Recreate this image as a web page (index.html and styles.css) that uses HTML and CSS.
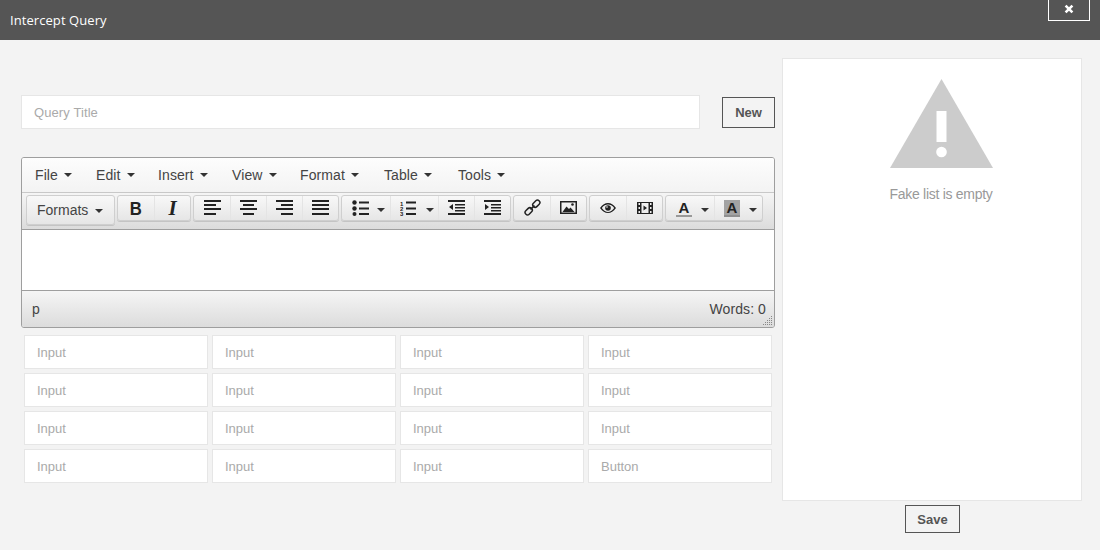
FILE: index.html
```html
<!DOCTYPE html>
<html lang="en">
<head>
<meta charset="utf-8">
<title>Intercept Query</title>
<link rel="stylesheet" href="styles.css">
</head>
<body>
<header class="header">
  <h1 class="header-title">Intercept Query</h1>
  <button class="close-btn" type="button" aria-label="Close">
    <svg width="10" height="10" viewBox="0 0 10 10"><path d="M1.6 1.6 8.4 8.4M8.4 1.6 1.6 8.4" stroke="#fff" stroke-width="2.6" fill="none"/></svg>
  </button>
</header>
<main class="main">
  <section class="left">
    <div class="title-row">
      <input class="title-input" type="text" placeholder="Query Title">
      <button class="plain-btn new-btn" type="button">New</button>
    </div>
    <div class="editor">
      <div class="menubar">
        <div class="menu-item">File<span class="caret"></span></div>
        <div class="menu-item">Edit<span class="caret"></span></div>
        <div class="menu-item">Insert<span class="caret"></span></div>
        <div class="menu-item">View<span class="caret"></span></div>
        <div class="menu-item">Format<span class="caret"></span></div>
        <div class="menu-item">Table<span class="caret"></span></div>
        <div class="menu-item">Tools<span class="caret"></span></div>
      </div>
      <div class="toolbar">
        <div class="group formats">Formats<span class="caret"></span></div>
        <div class="group">
          <div class="tool glyph"><span class="glyph-b">B</span></div>
          <div class="tool glyph"><span class="glyph-i">I</span></div>
        </div>
        <div class="group">
          <div class="tool"><svg class="ico" width="17" height="15" viewBox="0 0 17 15"><path d="M0 0h17v2H0zM0 4h12v2H0zM0 8h17v2H0zM0 13h12v2H0z"/></svg></div>
          <div class="tool"><svg class="ico" width="17" height="15" viewBox="0 0 17 15"><path d="M0 0h17v2H0zM3 4h11v2H3zM0 8h17v2H0zM3 13h11v2H3z"/></svg></div>
          <div class="tool"><svg class="ico" width="17" height="15" viewBox="0 0 17 15"><path d="M0 0h17v2H0zM5 4h12v2H5zM0 8h17v2H0zM5 13h12v2H5z"/></svg></div>
          <div class="tool"><svg class="ico" width="17" height="15" viewBox="0 0 17 15"><path d="M0 0h17v2H0zM0 4h17v2H0zM0 8h17v2H0zM0 13h17v2H0z"/></svg></div>
        </div>
        <div class="group">
          <div class="tool split"><svg class="ico" width="17" height="16" viewBox="0 0 17 16"><circle cx="2.500" cy="2.500" r="2.200"/><circle cx="2.500" cy="8.500" r="2.200"/><circle cx="2.500" cy="14" r="2"/><path d="M7 1.500h10v2H7zM7 7.500h10v2H7zM7 13h10v2H7z"/></svg><span class="caret"></span></div>
          <div class="tool split gap10"><svg class="ico" width="16" height="16" viewBox="0 0 16 16"><text class="num" x="0" y="5.500">1</text><text class="num" x="0" y="11">2</text><text class="num" x="0" y="16">3</text><path d="M6 1.500h10v2H6zM6 7.500h10v2H6zM6 13h10v2H6z"/></svg><span class="caret"></span></div>
          <div class="tool"><svg class="ico" width="17" height="15" viewBox="0 0 17 15"><path d="M0 0h17v2H0zM7 4h10v1.500H7zM7 7h10v1.500H7zM7 10h10v1.500H7zM0 13h17v2H0zM5 4v6L1 7z"/></svg></div>
          <div class="tool"><svg class="ico" width="17" height="15" viewBox="0 0 17 15"><path d="M0 0h17v2H0zM7 4h10v1.500H7zM7 7h10v1.500H7zM7 10h10v1.500H7zM0 13h17v2H0zM1 4v6l4-3z"/></svg></div>
        </div>
        <div class="group">
          <div class="tool"><svg width="17" height="17" viewBox="0 0 17 17" fill="none" stroke="#222" stroke-width="1.500"><rect x="-4" y="-2.400" width="8" height="4.800" rx="2.300" transform="translate(4.700 12.300) rotate(-45)"/><rect x="-4" y="-2.400" width="8" height="4.800" rx="2.300" transform="translate(12.300 4.700) rotate(-45)"/><path d="M6.500 10.500 10.500 6.500" stroke-width="1.700"/></svg></div>
          <div class="tool"><svg width="17" height="13" viewBox="0 0 17 13"><path class="frame" d="M0 0h17v13H0zM1.500 1.500v10h14v-10z"/><path class="frame" d="M2.500 11 6.500 5.500 9 8l1.500-1.500 4 4.500z"/><circle class="frame" cx="12.500" cy="3.500" r="1.300"/></svg></div>
        </div>
        <div class="group">
          <div class="tool"><svg width="16" height="10" viewBox="0 0 16 10"><path class="frame" d="M0 5C2.500 1.500 5 0 8 0s5.500 1.500 8 5c-2.500 3.500-5 5-8 5S2.500 8.500 0 5zm1.800 0C3.800 7.800 5.800 9 8 9s4.200-1.200 6.200-4C12.200 2.400 10.200 1.500 8 1.500S3.800 2.400 1.800 5z"/><circle class="frame" cx="8" cy="5" r="2.800"/><circle class="eye-glint" cx="7" cy="4" r=".8"/></svg></div>
          <div class="tool"><svg width="16" height="12" viewBox="0 0 16 12"><path class="frame" d="M0 0h16v12H0zM1.500 1v2h1.500V1zM1.500 5v2h1.500V5zM1.500 9v2h1.500V9zM13 1v2h1.500V1zM13 5v2h1.500V5zM13 9v2h1.500V9zM4.500 1v10h7V1z"/><path class="frame" d="M6.500 3.500v5L10 6z"/></svg></div>
        </div>
        <div class="group">
          <div class="tool split gap9"><span class="color-a">A</span><span class="caret"></span></div>
          <div class="tool split gap9"><span class="color-a color-back">A</span><span class="caret"></span></div>
        </div>
      </div>
      <div class="edit-area"></div>
      <div class="statusbar">
        <span>p</span>
        <span class="words">Words: 0</span>
        <svg class="resize" width="10" height="10" viewBox="0 0 10 10"><path d="M8 0h1v1H8zM6 2h1v1H6zM8 2h1v1H8zM4 4h1v1H4zM6 4h1v1H6zM8 4h1v1H8zM2 6h1v1H2zM4 6h1v1H4zM6 6h1v1H6zM8 6h1v1H8zM0 8h1v1H0zM2 8h1v1H2zM4 8h1v1H4zM6 8h1v1H6zM8 8h1v1H8z"/></svg>
      </div>
    </div>
    <div class="field-grid">
      <input class="cell" type="text" placeholder="Input">
      <input class="cell" type="text" placeholder="Input">
      <input class="cell" type="text" placeholder="Input">
      <input class="cell" type="text" placeholder="Input">
      <input class="cell" type="text" placeholder="Input">
      <input class="cell" type="text" placeholder="Input">
      <input class="cell" type="text" placeholder="Input">
      <input class="cell" type="text" placeholder="Input">
      <input class="cell" type="text" placeholder="Input">
      <input class="cell" type="text" placeholder="Input">
      <input class="cell" type="text" placeholder="Input">
      <input class="cell" type="text" placeholder="Input">
      <input class="cell" type="text" placeholder="Input">
      <input class="cell" type="text" placeholder="Input">
      <input class="cell" type="text" placeholder="Input">
      <button class="cell cell-btn" type="button">Button</button>
    </div>
  </section>
  <aside class="right">
    <div class="panel">
      <svg class="warn" width="103" height="89" viewBox="0 0 103 89"><path class="warn-tri" d="M51.500 0 103 89H0z"/><path class="warn-mark" d="M46.500 32h10v31h-10z"/><circle class="warn-mark" cx="51.500" cy="73" r="5.300"/></svg>
      <p class="empty">Fake list is empty</p>
    </div>
    <button class="plain-btn save-btn" type="button">Save</button>
  </aside>
</main>
</body>
</html>
```
FILE: styles.css
```css
* { box-sizing: border-box; }
html, body { margin: 0; padding: 0; }
body {
  width: 1100px;
  height: 550px;
  overflow: hidden;
  background: #f3f3f3;
  font-family: "Liberation Sans", Arial, sans-serif;
  font-size: 14px;
  color: #333;
}
.header {
  height: 40px;
  background: #555;
  display: flex;
  justify-content: space-between;
  align-items: flex-start;
  padding-right: 10px;
}
.header-title {
  margin: 0;
  padding-left: 10px;
  font-family: "Open Sans", sans-serif;
  font-size: 13px;
  font-weight: 400;
  line-height: 40px;
  letter-spacing: .07px;
  color: #fff;
}
.close-btn {
  width: 42px;
  height: 21px;
  padding: 0 0 3px;
  border: 1px solid #fff;
  border-top: 0;
  background: transparent;
  display: flex;
  align-items: center;
  justify-content: center;
}
.main { display: flex; align-items: flex-start; padding-left: 21px; }
.left { width: 754px; }
.title-row {
  display: flex;
  justify-content: space-between;
  align-items: flex-start;
  margin-top: 55px;
}
.title-input, .cell {
  border: 1px solid #e6e6e6;
  background: #fff;
  font: 13px "Liberation Sans", Arial, sans-serif;
  color: #333;
  outline: 0;
  border-radius: 0;
}
.title-input { width: 679px; height: 34px; padding: 0 12px; letter-spacing: .1px; }
.title-input::placeholder, .cell::placeholder { color: #aaa; opacity: 1; }
.plain-btn {
  border: 1px solid #555;
  background: transparent;
  border-radius: 0;
  padding: 0;
  font: 700 13px "Liberation Sans", Arial, sans-serif;
  color: #555;
}
.new-btn { width: 53px; height: 31px; margin-top: 2px; }
.editor {
  margin-top: 28px;
  height: 171px;
  border: 1px solid #9e9e9e;
  border-radius: 3px;
  overflow: hidden;
  display: flex;
  flex-direction: column;
}
.menubar {
  height: 35px;
  flex: none;
  display: flex;
  padding-left: 1px;
  border-bottom: 1px solid #c8c8c8;
  background: linear-gradient(#fdfdfd, #f3f3f3);
}
.menu-item {
  display: flex;
  align-items: center;
  padding: 0 12px;
  letter-spacing: .1px;
  color: #444;
}
.menu-item:nth-child(1) { width: 61px; }
.menu-item:nth-child(2) { width: 62px; }
.menu-item:nth-child(3) { width: 74px; }
.menu-item:nth-child(4) { width: 68px; }
.menu-item:nth-child(5) { width: 84px; }
.menu-item:nth-child(6) { width: 74px; }
.caret {
  width: 0;
  height: 0;
  flex: none;
  margin-left: 6px;
  border-top: 4px solid #333;
  border-left: 4px solid transparent;
  border-right: 4px solid transparent;
}
.toolbar {
  height: 37px;
  flex: none;
  display: flex;
  align-items: flex-start;
  gap: 2px;
  padding: 2px 0 0 4px;
  border-bottom: 1px solid #9e9e9e;
  background: linear-gradient(#f5f5f5, #dcdcdc);
}
.group {
  height: 26px;
  display: flex;
  border: 1px solid #cfcfcf;
  border-radius: 3px;
  background: linear-gradient(#f8f8f8, #e6e6e6);
  box-shadow: 0 1px 0 #c4c4c4;
}
.formats {
  width: 89px;
  height: 30px;
  align-items: center;
  padding-left: 10px;
  color: #444;
}
.formats .caret { margin-left: 7px; margin-top: 1px; }
.tool {
  width: 36px;
  height: 24px;
  display: flex;
  align-items: center;
  justify-content: center;
  padding-bottom: 1px;
  border-left: 1px solid #e4e4e4;
}
.tool:first-child { border-left: 0; }
.glyph { padding-bottom: 0; }
.split { width: 48px; justify-content: flex-start; padding-left: 10px; }
.split + .split { padding-left: 9px; }
.split .ico { margin-top: 1px; }
.split .caret { margin-left: 8px; margin-top: 5px; }
.split.gap10 .caret { margin-left: 10px; }
.split.gap9 .caret { margin-left: 9px; }
.ico { fill: #222; display: block; flex: none; }
.frame { fill: #222; fill-rule: evenodd; }
.eye-glint { fill: #fff; }
.num { font: 700 6px "Liberation Sans", Arial, sans-serif; fill: #222; }
.glyph-b {
  display: block;
  font: 700 19px/1 "Liberation Sans", Arial, sans-serif;
  color: #222;
  transform: scaleX(.88);
}
.glyph-i { display: block; font: italic 700 21px/1 "Liberation Serif", serif; color: #222; }
.color-a {
  width: 16px;
  height: 17px;
  margin-top: 2px;
  flex: none;
  display: block;
  text-align: center;
  font: 700 15px/15px "Liberation Sans", Arial, sans-serif;
  color: #222;
  border-bottom: 2px solid #999;
}
.color-back { background: #a3a3a3; border-bottom-color: #8f8f8f; }
.edit-area { height: 61px; flex: none; background: #fff; border-bottom: 1px solid #9e9e9e; }
.statusbar {
  flex: 1;
  position: relative;
  display: flex;
  align-items: center;
  justify-content: space-between;
  padding: 0 8px 0 10px;
  background: linear-gradient(#f5f5f5, #dcdcdc);
  color: #444;
}
.words { letter-spacing: .1px; }
.resize { position: absolute; right: 1px; bottom: 1px; fill: #888; }
.field-grid {
  margin-top: 7px;
  padding: 0 3px;
  display: grid;
  grid-template-columns: repeat(4, 184px);
  grid-auto-rows: 34px;
  gap: 4px;
}
.cell { width: 184px; height: 34px; padding: 0 12px; }
.cell-btn { text-align: left; color: #aaa; }
.right {
  width: 300px;
  margin: 18px 0 0 7px;
  display: flex;
  flex-direction: column;
  align-items: center;
}
.panel {
  width: 300px;
  height: 443px;
  background: #fff;
  border: 1px solid #e6e6e6;
  display: flex;
  flex-direction: column;
  align-items: center;
  padding: 20px 0 0 18px;
}
.warn { display: block; flex: none; }
.warn-tri { fill: #ccc; }
.warn-mark { fill: #fff; }
.empty { margin: 18px 0 0; line-height: 16px; letter-spacing: -.28px; color: #999; }
.save-btn { width: 55px; height: 28px; margin-top: 4px; padding-left: 1px; }
```
